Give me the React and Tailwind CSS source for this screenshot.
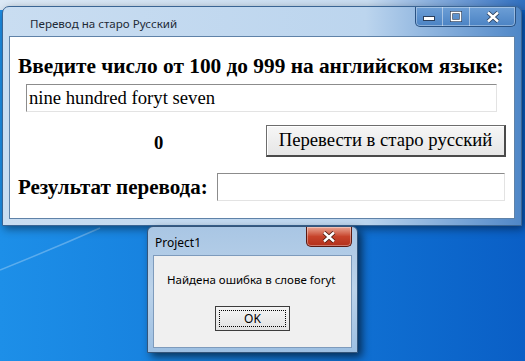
import React from "react";

function CaptionButtons() {
  return (
    <div className="ml-auto mr-[5px] flex h-[20px] rounded-b-[5px] border border-t-0 border-[#2a5282] bg-gradient-to-b from-[#6d9fd6] to-[#4b83c4] shadow-[inset_0_0_0_1px_rgba(255,255,255,0.35)]">
      <div className="flex w-[27px] items-center justify-center border-r border-[rgba(255,255,255,0.45)]">
        <svg width="14" height="8" viewBox="0 0 14 8">
          <rect x="1.5" y="3.5" width="11" height="4" fill="#fff" stroke="#2b3f5c" strokeWidth="1" />
        </svg>
      </div>
      <div className="flex w-[27px] items-center justify-center border-r border-[rgba(255,255,255,0.45)]">
        <svg width="12" height="11" viewBox="0 0 12 11">
          <rect x="1.5" y="1.5" width="9" height="8" fill="none" stroke="#2b3f5c" strokeWidth="3" />
          <rect x="1.5" y="1.5" width="9" height="8" fill="none" stroke="#fff" strokeWidth="1.6" />
        </svg>
      </div>
      <div className="flex w-[45px] items-center justify-center">
        <svg width="14" height="12" viewBox="0 0 14 12">
          <path d="M2 1.5 L12 10.5 M12 1.5 L2 10.5" stroke="#2b3f5c" strokeWidth="4.2" />
          <path d="M2 1.5 L12 10.5 M12 1.5 L2 10.5" stroke="#fff" strokeWidth="2.4" />
        </svg>
      </div>
    </div>
  );
}

function MainWindow() {
  return (
    <div className="absolute left-[2px] top-[6px] flex h-[220px] w-[520px] flex-col rounded-t-[7px] border border-[#3a6594] bg-gradient-to-r from-[#c9ddf1] via-[#bcd5ee] via-70% to-[#4f87c7] shadow-[2px_3px_8px_rgba(0,0,0,0.45)]">
      <div className="flex h-[29px] items-start">
        <span className="ml-[27px] mt-[9px] text-[11.6px] leading-[16px] text-[#1e2a36] [font-family:'Noto_Sans',sans-serif]">
          Перевод на старо Русский
        </span>
        <CaptionButtons />
      </div>
      <div className="mx-[6px] mb-[6px] flex flex-1 flex-col border border-[#5f82a8] bg-white [font-family:'Liberation_Serif',serif] text-black">
        <div className="ml-[8px] mt-[17px] h-[24px] text-[21.33px] font-bold leading-[24px]">
          Введите число от 100 до 999 на английском языке:
        </div>
        <div className="ml-[16px] mt-[6px] flex h-[28px] w-[471px] items-center border border-[#8c8c8c] border-b-[#e3e3e3] border-r-[#e3e3e3] pl-[2px] text-[18.67px] leading-none">
          nine hundred foryt seven
        </div>
        <div className="mt-[13px] flex h-[32px] items-center">
          <span className="ml-[144px] mt-[5px] text-[18.67px] font-bold leading-none">0</span>
          <button className="ml-auto mr-[8px] flex h-[32px] w-[240px] items-center justify-center border border-[#6d6d6d] border-b-[2px] border-r-[2px] border-b-[#4a4a4a] border-r-[#4a4a4a] bg-gradient-to-b from-[#f6f6f6] to-[#e6e6e6] text-[18.67px] leading-none shadow-[inset_1px_1px_0_#fff]">
            Перевести в старо русский
          </button>
        </div>
        <div className="mt-[16px] flex h-[28px] items-center">
          <span className="ml-[8px] text-[21px] font-bold leading-none">Результат перевода:</span>
          <div className="ml-auto mr-[9px] h-[28px] w-[288px] border border-[#8c8c8c] border-b-[#e3e3e3] border-r-[#e3e3e3]" />
        </div>
      </div>
    </div>
  );
}

function Dialog() {
  return (
    <div className="absolute left-[147px] top-[226px] flex h-[127px] w-[211px] flex-col rounded-t-[6px] border border-[#34557a] bg-gradient-to-b from-[#a9c6e4] via-[#bcd3ea] to-[#9dbfe2] shadow-[4px_4px_8px_rgba(0,0,0,0.6)]">
      <div className="flex h-[28px] items-start">
        <span className="ml-[7px] mt-[8px] text-[12px] leading-[16px] text-black [font-family:'Noto_Sans',sans-serif]">
          Project1
        </span>
        <div className="ml-auto mr-[5px] flex h-[20px] w-[46px] items-center justify-center rounded-b-[5px] border border-t-0 border-[#5b1a12] bg-gradient-to-b from-[#e8a493] via-[#c7432b] to-[#b2301b] shadow-[inset_0_0_0_1px_rgba(255,255,255,0.35)]">
          <svg width="14" height="12" viewBox="0 0 14 12">
            <path d="M2 1.5 L12 10.5 M12 1.5 L2 10.5" stroke="#4a1a10" strokeWidth="4.2" />
            <path d="M2 1.5 L12 10.5 M12 1.5 L2 10.5" stroke="#fff" strokeWidth="2.4" />
          </svg>
        </div>
      </div>
      <div className="mx-[5px] mb-[4px] flex flex-1 flex-col border border-[#7e9bbc] bg-[#f0f0f0] [font-family:'Noto_Sans',sans-serif] text-black">
        <div className="ml-[13px] mt-[16px] h-[16px] text-[11.5px] leading-[16px]">Найдена ошибка в слове foryt</div>
        <div className="ml-[61px] mt-[18px] flex h-[25px] w-[75px] items-center justify-center border border-[#3c3c3c] bg-gradient-to-b from-[#f4f4f4] to-[#e2e2e2] p-[3px]">
          <div className="flex h-full w-full items-center justify-center border border-dotted border-black text-[12px] leading-none">
            OK
          </div>
        </div>
      </div>
    </div>
  );
}

export default function App() {
  return (
    <div className="relative h-[361px] w-[525px] overflow-hidden bg-gradient-to-r from-[#1d8fe8] via-[#1479d9] to-[#0a5fc6]">
      <div className="absolute left-0 top-0 h-[10px] w-[525px] bg-gradient-to-r from-[#dbe8f5] via-[#c8dcf0] via-70% to-[#2f6fc0]" />
      <svg className="absolute left-0 top-[200px]" width="200" height="100" viewBox="0 0 200 100">
        <path d="M0 70 Q 50 50 100 28" stroke="rgba(255,255,255,0.28)" strokeWidth="1.5" fill="none" />
      </svg>
      <MainWindow />
      <Dialog />
    </div>
  );
}
